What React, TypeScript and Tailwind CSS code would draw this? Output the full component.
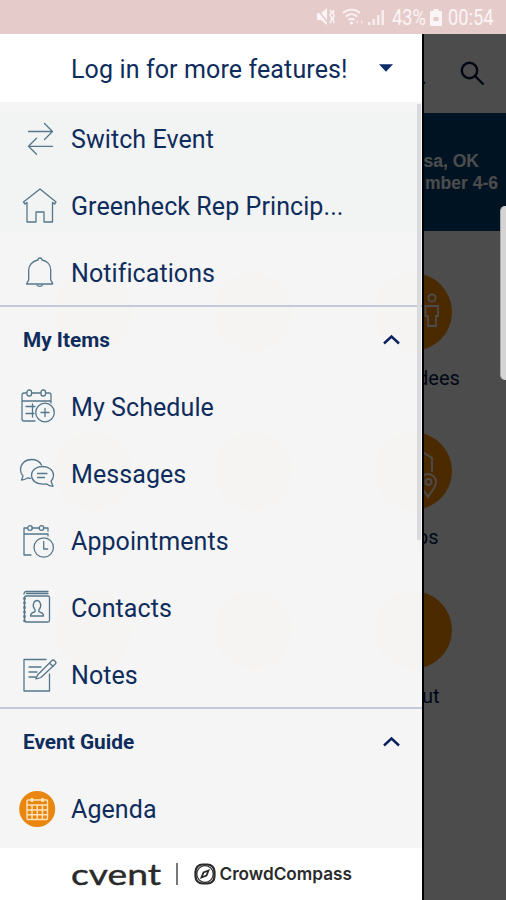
import type { FC, ReactNode } from "react";

interface IconProps {
  children: ReactNode;
}

const LineIcon: FC<IconProps> = ({ children }) => (
  <svg
    width="40"
    height="40"
    viewBox="0 0 40 40"
    fill="none"
    stroke="#55778c"
    strokeWidth="1.3"
    strokeLinecap="round"
    strokeLinejoin="round"
  >
    {children}
  </svg>
);

const SwitchIcon = () => (
  <LineIcon>
    <path d="M9.500 11.500h24M25.500 3.500l8 8-8 8" />
    <path d="M33.500 26.300H9.500M17.500 18.300l-8 8 8 8" />
  </LineIcon>
);

const HomeIcon = () => (
  <LineIcon>
    <path d="M21 2L4.500 15l1.500 2 2-1.500v19.500h9v-10h8v10h8.500V15.500l2 1.500 1.500-2z" />
  </LineIcon>
);

const BellIcon = () => (
  <LineIcon>
    <path d="M19 6a2 2 0 0 1 4 0c5.300 1 8.700 5 8.700 10v9.500c0 2 2 2.500 2 4.500H7.700c0-2 2-2.500 2-4.500V16c0-5 4-9 9.300-10z" />
    <path d="M18 31c1 1.800 4.500 1.800 5.500 0" />
  </LineIcon>
);

const ScheduleIcon = () => (
  <LineIcon>
    <path d="M16 33H5a2 2 0 0 1-2-2V7a2 2 0 0 1 2-2h2.500M13 5h8.500M27 5h3a2 2 0 0 1 2 2v8M3 13h29" />
    <rect x="8" y="2" width="4.500" height="6" rx="2" />
    <rect x="22" y="2" width="4.500" height="6" rx="2" />
    <path d="M7 18.500h9M7 25.500h8M13.500 16v13" />
    <circle cx="26" cy="24.500" r="9.300" />
    <path d="M26 20.500v8M22 24.500h8" />
  </LineIcon>
);

const MessagesIcon = () => (
  <LineIcon>
    <path d="M22.500 10C20.500 6 16.500 4.500 12.500 4.500 6 4.500 1.500 9 1.500 14.500c0 3 1 5 2.500 6.700L2.500 25c2.500 0 4.500-1 6-2l3 .3" />
    <path d="M23.500 11.500c6.500 0 11 3.800 11 8.800 0 2.400-1 4.400-2.500 6l2 5c-3 0-5-1-6.700-2.500-1 .3-2.300.4-3.800.4-6.500 0-11-3.900-11-8.900s4.500-8.800 11-8.800z" />
    <path d="M18.500 18.500h9.500M18.500 22.500h7" />
  </LineIcon>
);

const AppointmentsIcon = () => (
  <LineIcon>
    <path d="M12 33H5V6h3.500M13 6h7M25 6h4v3M29 12v2M5 12h24" />
    <circle cx="11" cy="6" r="2.300" />
    <circle cx="22.500" cy="6" r="2.300" />
    <circle cx="24.700" cy="25.500" r="9.700" />
    <path d="M24.700 19.500v7.500h4" />
  </LineIcon>
);

const ContactsIcon = () => (
  <LineIcon>
    <path d="M5 5a2.500 2.500 0 0 1 2-2.500H29M7.500 4.500H29" />
    <rect x="5.500" y="7" width="25" height="26" rx="1.500" />
    <path d="M5.500 9v23" strokeWidth="2.400" strokeDasharray="1 3.500" />
    <path d="M11.500 27c0-3 2-3.500 4-4 1-.5 1-2 0-3-3-4 0-8.500 2.500-8.500s5.500 4.500 2.500 8.500c-1 1-1 2.500 0 3 2 .5 4 1 4 4z" />
  </LineIcon>
);

const NotesIcon = () => (
  <LineIcon>
    <path d="M27 3.500H5v31.500h25.500V18" />
    <path d="M10 11h12M10 16h8M10 21h7" />
    <path d="M18.500 19L33 4.500c1.500-1.500 5 1.500 3.500 3.300L22 21.500l-5 1.500zM30.500 7l3.500 3.500" />
  </LineIcon>
);

const AgendaIcon = () => (
  <svg width="40" height="40" viewBox="0 0 40 40" fill="none" stroke="#ffe3b8" strokeWidth="1.400">
    <circle cx="18.200" cy="19" r="18" fill="#e8860f" stroke="none" />
    <rect x="8" y="10" width="20.500" height="19.500" rx="1" />
    <path d="M8 15h20.500M8 20h20.500M8 24.700h20.500M13 15v14.500M18.200 15v14.500M23.400 15v14.500" />
    <path d="M13 8v4M23.500 8v4" strokeWidth="2.500" />
  </svg>
);

interface Item {
  icon: ReactNode;
  label: string;
}

const topItems: Item[] = [
  { icon: <SwitchIcon />, label: "Switch Event" },
  { icon: <HomeIcon />, label: "Greenheck Rep Princip..." },
  { icon: <BellIcon />, label: "Notifications" },
];

const myItems: Item[] = [
  { icon: <ScheduleIcon />, label: "My Schedule" },
  { icon: <MessagesIcon />, label: "Messages" },
  { icon: <AppointmentsIcon />, label: "Appointments" },
  { icon: <ContactsIcon />, label: "Contacts" },
  { icon: <NotesIcon />, label: "Notes" },
];

const MenuRow: FC<Item> = ({ icon, label }) => (
  <div className="flex h-[67px] items-center pl-[19px]">
    <div className="w-[52px]">{icon}</div>
    <span className="text-[25px] tracking-[0.08px] whitespace-nowrap">{label}</span>
  </div>
);

const SectionHeader: FC<{ title: string }> = ({ title }) => (
  <div className="-mt-[2px] flex h-[69px] items-center justify-between border-t-2 border-[#c3cbd9] pr-[22px] pl-[23px]">
    <span className="text-[20.800px] font-bold">{title}</span>
    <svg width="17" height="11" viewBox="0 0 17 11" className="mb-[2px]" fill="none" stroke="#0b2261" strokeWidth="2.400">
      <path d="M1 9.500l7.500-7 7.500 7" />
    </svg>
  </div>
);

const StatusBar = () => (
  <div className="flex h-[34px] shrink-0 items-center justify-end bg-[#e6cbcb] pr-[12px] text-white/80">
    <svg width="72" height="22" viewBox="0 0 72 22" fill="currentColor">
      <path d="M1 7h4l6-5v17l-6-5H1z" />
      <path d="M1 3l12 15" stroke="#e6cbcb" strokeWidth="1.500" />
      <path d="M14 4l2 2-2 3 2 3-2 5M18 4l-1 3 1 3-1 3 1 4" fill="none" stroke="currentColor" strokeWidth="1.500" />
      <g fill="none" stroke="currentColor" strokeWidth="1.800">
        <path d="M27 7c5-4.500 12-4.500 17 0M30 10.500c3.500-3 8-3 11 0M32.500 14c2-1.500 4-1.500 6 0" />
      </g>
      <circle cx="35.500" cy="17" r="1.500" />
      <path d="M40 16l2-2v4zM45 14l2 2-2 2z" opacity=".6" />
      <path d="M52 16h2.500v3H52zM56.500 13H59v6h-2.500zM61 9h2.500v10H61zM65.500 4H68v15h-2.500z" opacity=".8" />
    </svg>
    <div className="ml-[4px] h-[30px] w-[35px]">
      <span className="inline-block origin-left scale-x-[0.83] text-[22px] leading-[31px]">43%</span>
    </div>
    <svg width="12" height="17" viewBox="0 0 12 17" className="ml-[3px]">
      <path d="M3.500 0h5v2H11a1 1 0 0 1 1 1v13a1 1 0 0 1-1 1H1a1 1 0 0 1-1-1V3a1 1 0 0 1 1-1h2.500z" fill="currentColor" />
      <path d="M3.500 8h5v4h-5z" fill="#e6cbcb" />
    </svg>
    <div className="ml-[6px] h-[30px] w-[46px]">
      <span className="inline-block origin-left scale-x-[0.83] text-[22px] leading-[31px]">00:54</span>
    </div>
  </div>
);

const Tile: FC<{ children?: ReactNode }> = ({ children }) => (
  <div className="flex h-[159px] w-[160px] flex-col items-center">
    <div className="size-[78px] rounded-full bg-[#ff8c00]">{children}</div>
  </div>
);

const EventPage = () => (
  <div className="absolute inset-0 overflow-hidden bg-white">
    <div className="flex h-[79px] items-center justify-end pr-[21px] text-[#00143c]">
      <span className="mr-[32px] pt-[4px] text-[24px]">.</span>
      <svg width="26" height="26" viewBox="0 0 26 26" fill="none" stroke="currentColor" strokeWidth="2.400">
        <circle cx="10.500" cy="9.500" r="7.700" />
        <path d="M16 15l8.500 8.500" />
      </svg>
    </div>
    <div className="flex h-[118px] flex-col items-end justify-center bg-[#004275] pr-[8px] font-['Liberation_Sans',sans-serif] text-[17.500px] leading-[22px] font-bold text-white">
      <span className="pr-[19px]">sa, OK</span>
      <span>mber 4-6</span>
    </div>
    <div className="ml-[13px] grid w-[480px] grid-cols-3 pt-[42px]">
      <Tile />
      <Tile />
      <Tile>
        <svg width="78" height="78" viewBox="0 0 78 78" fill="none" stroke="white" strokeWidth="1.800">
          <circle cx="58" cy="25" r="3.600" />
          <path d="M51.500 33h12.500v10h-2v10h-8V43h-2.500z" />
        </svg>
        <span className="block pt-[15px] pl-[43px] text-[20px] leading-[24px] text-[#00204d]">dees</span>
      </Tile>
      <Tile />
      <Tile />
      <Tile>
        <svg width="78" height="78" viewBox="0 0 78 78" fill="none" stroke="white" strokeWidth="1.800">
          <path d="M38 20l12 1 8 5v14" />
          <path d="M54 65c-4-7-8-10-8-15a8 8 0 0 1 16 0c0 5-4 8-8 15z" />
          <circle cx="54.500" cy="50" r="3" />
        </svg>
        <span className="block pt-[15px] pl-[43px] text-[20px] leading-[24px] text-[#00204d]">ps</span>
      </Tile>
      <Tile />
      <Tile />
      <Tile>
        <span className="block pt-[93px] pl-[48px] text-[20px] leading-[24px] text-[#00204d]">ut</span>
      </Tile>
    </div>
  </div>
);

const Drawer = () => (
  <div className="absolute inset-y-0 left-0 flex w-[422px] flex-col overflow-hidden text-[#0e2c5c]">
    <div className="flex h-[68px] shrink-0 items-center justify-between bg-white pt-[3px] pr-[29px] pl-[71px]">
      <span className="text-[25px] tracking-[0.12px]">Log in for more features!</span>
      <svg width="14" height="8" viewBox="0 0 15 8" className="mb-[3px]" fill="#0d2c6c">
        <path d="M0 0h15L7.500 8z" />
      </svg>
    </div>
    <div className="relative grow overflow-hidden bg-[#f5f5f5]/[98.8%] pt-[4px]">
      {topItems.map((item) => (
        <MenuRow key={item.label} {...item} />
      ))}
      <SectionHeader title="My Items" />
      {myItems.map((item) => (
        <MenuRow key={item.label} {...item} />
      ))}
      <SectionHeader title="Event Guide" />
      <MenuRow icon={<AgendaIcon />} label="Agenda" />
      <div className="absolute top-[2px] right-[1px] h-[436px] w-[4px] bg-[#d8dadc]" />
    </div>
    <div className="flex h-[52px] shrink-0 items-center bg-white pl-[71px] text-[#2a2a2a]">
      <div className="w-[105px]">
        <span className="inline-block origin-left scale-x-[1.330] font-['Lato',sans-serif] text-[28px] leading-[40px] [-webkit-text-stroke:0.4px_#2a2a2a]">
          cvent
        </span>
      </div>
      <div className="h-[22px] w-[1.500px] bg-[#777]" />
      <svg width="22" height="22" viewBox="0 0 22 22" className="ml-[16px]" fill="none" stroke="currentColor" strokeWidth="2.200">
        <rect x="1.500" y="1.500" width="19" height="19" rx="7" />
        <circle cx="11" cy="11" r="8.300" strokeWidth="1.300" />
        <path d="M14.500 7.500l-2 5-5 2 2-5z" strokeWidth="1.800" />
      </svg>
      <span className="ml-[4px] font-['Inter',sans-serif] text-[17.200px] font-semibold">CrowdCompass</span>
    </div>
  </div>
);

const App = () => (
  <div className="flex h-[900px] w-[506px] flex-col overflow-hidden font-['Roboto',sans-serif]">
    <StatusBar />
    <div className="relative grow">
      <EventPage />
      <div className="absolute inset-y-0 right-0 left-[422px] border-l-2 border-black bg-black/70" />
      <Drawer />
      <div className="absolute top-[172px] right-0 h-[174px] w-[6px] rounded-l-[5px] border-l border-[#aaa] bg-[#d4d4d4]" />
    </div>
  </div>
);

export default App;
